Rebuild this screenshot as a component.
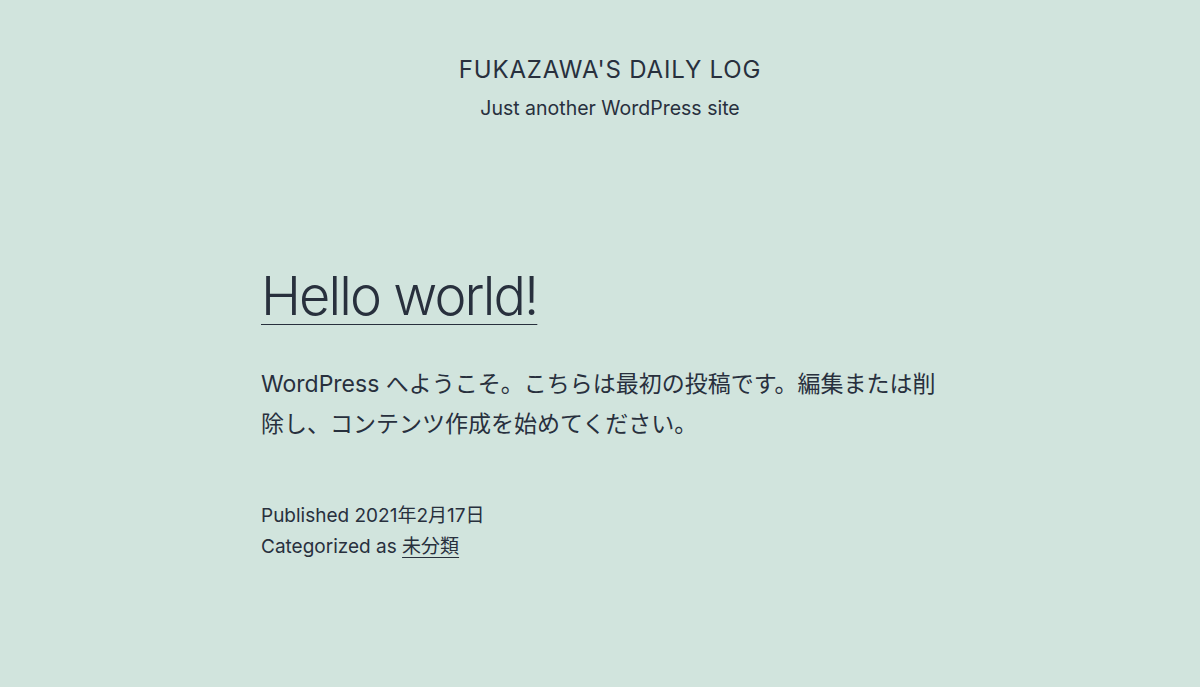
export default function App() {
  return (
    <div className="min-h-screen bg-[#d1e4dd] text-[#28303d] font-['Inter','Noto_Sans_CJK_JP',sans-serif]">
      <header className="pt-[55px] pl-[20px] text-center">
        <p className="text-[24px] leading-[30px] uppercase tracking-[0.035em]">Fukazawa's Daily Log</p>
        <p className="mt-[9px] text-[19.5px] leading-[28px]">Just another WordPress site</p>
      </header>
      <main className="mx-auto w-[678px]">
        <h1 className="mt-[141px] text-[54px] leading-[66px] font-light tracking-[-0.035em]">
          <a href="#" className="underline decoration-1 underline-offset-[9px]">
            Hello world!
          </a>
        </h1>
        <p className="mt-[35px] text-[23px] leading-[40px]">
          WordPress へようこそ。こちらは最初の投稿です。編集または削除し、コンテンツ作成を始めてください。
        </p>
        <footer className="mt-[56px] text-[19px] leading-[31px]">
          <div>Published 2021年2月17日</div>
          <div>
            Categorized as{" "}
            <a href="#" className="underline decoration-1 underline-offset-[4px]">
              未分類
            </a>
          </div>
        </footer>
      </main>
    </div>
  );
}
